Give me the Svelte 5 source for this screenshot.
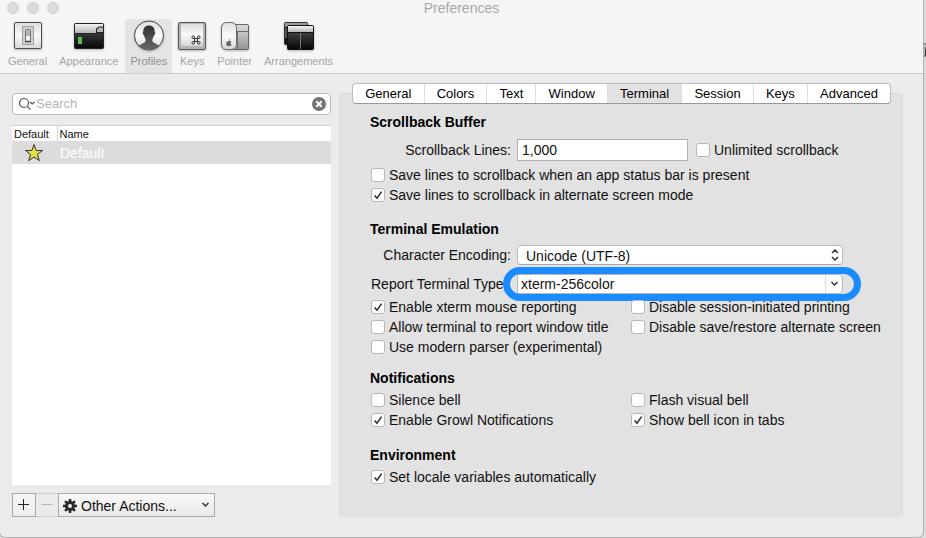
<script>
  const tabs = ['General', 'Colors', 'Text', 'Window', 'Terminal', 'Session', 'Keys', 'Advanced'];
  const tools = ['General', 'Appearance', 'Profiles', 'Keys', 'Pointer', 'Arrangements'];
  let activeTab = $state('Terminal');
  let activeTool = $state('Profiles');
  let query = $state('');
  let lines = $state('1,000');
  let terminalType = $state('xterm-256color');
</script>

{#snippet check(text, on)}
  <label class="check">
    <span class="box">
      <input type="checkbox" checked={on} />
      <svg viewBox="0 0 14 14" aria-hidden="true"><path d="M3.6 7.4 L6 10.2 L10.6 3.6" /></svg>
    </span>
    <span>{text}</span>
  </label>
{/snippet}

{#snippet toolIcon(name)}
  <svg class="tool-icon" viewBox="0 0 34 34" aria-hidden="true">
    {#if name === 'General'}
      <rect x="3.5" y="2.5" width="27" height="26" rx="1.5" fill="url(#plate)" stroke="#4b4b4b" />
      <rect x="11.5" y="6.5" width="11" height="18" fill="#cfcfcf" stroke="#a2a2a2" />
      <rect x="14.5" y="9.5" width="5" height="12" rx="1" fill="#f2f2f2" stroke="#777" />
      <rect x="15" y="10" width="4" height="6" fill="#b5b5b5" />
      <path d="M14 21.5h6" stroke="#444" stroke-width="1.5" />
    {:else if name === 'Appearance'}
      <rect x="2.5" y="3.5" width="29" height="25" rx="1" fill="url(#screen)" stroke="#222" />
      <path d="M3 4h28v3h-5l-2 2v4H3z" fill="url(#bar)" />
      <path d="M3 13.5h21.5V9l2-2h5M25 12.5h7" fill="none" stroke="#222" />
      <path d="M25 12V9.500l2-2h4V12z" fill="#b4b4b4" />
      <rect x="6" y="17" width="4" height="7" fill="#4fc25a" />
    {:else if name === 'Profiles'}
      <circle cx="17" cy="15.5" r="14.5" fill="url(#plate)" stroke="#444" />
      <path d="M17 5.500c-3.900 0-6 2.500-5.700 6.500-.8 0-.6 2.800.7 3.500.5 2 1.400 3 1.700 4.500.2 1.800-1.200 2.700-4 4-1.300.6-2.500 1.200-3.200 2A14 14 0 0 0 17 29.500a14 14 0 0 0 10.500-3.500c-.7-.8-1.900-1.400-3.200-2-2.800-1.300-4.200-2.200-4-4 .3-1.500 1.200-2.500 1.700-4.500 1.300-.7 1.500-3.500.7-3.500.3-4-1.800-6.500-5.700-6.500z" fill="url(#person)" />
    {:else if name === 'Keys'}
      <rect x="3.5" y="2.500" width="27" height="27" rx="1.500" fill="#b4b4b4" stroke="#555" />
      <rect x="6" y="4" width="22" height="22" rx="1.500" fill="url(#plate)" />
      <g fill="none" stroke="#333">
        <rect x="19.500" y="18.500" width="3" height="3" />
        <circle cx="18.200" cy="17.200" r="1.300" /><circle cx="23.800" cy="17.200" r="1.300" />
        <circle cx="18.200" cy="22.800" r="1.300" /><circle cx="23.800" cy="22.800" r="1.300" />
      </g>
    {:else if name === 'Pointer'}
      <rect x="10.500" y="4.500" width="20" height="25" rx="1.500" fill="url(#grey)" stroke="#686868" />
      <path d="M18 11.500h12M19.500 11.500v18" stroke="#707070" />
      <rect x="3.500" y="2.500" width="15" height="27" rx="5" fill="url(#plate)" stroke="#686868" />
      <path d="M10.800 21.300c-2.600-1-3.400 3-1.400 4.700.6.500 1 .1 1.500.1s1 .4 1.600-.2c.6-.6.9-1.100 1-1.600-1.200-.6-1.100-1.900-.1-2.500-.8-1-1.700-.8-2.600-.5zM10.800 20.800c.1-1 .7-1.500 1.400-1.700.1 1-.5 1.600-1.400 1.700z" fill="#666" />
    {:else}
      <rect x="2.500" y="2.500" width="23" height="22" rx="1" fill="#111" stroke="#333" />
      <path d="M3 3h22v4H3z" fill="#9b9b9b" />
      <path d="M3 8h3v10H3z" fill="#555" />
      <rect x="5.500" y="5.500" width="26" height="24" rx="1" fill="url(#screen)" stroke="#111" />
      <path d="M6 6h25v6H6z" fill="url(#bar)" />
      <path d="M5 12.500h27" stroke="#111" />
      <path d="M18.500 13v16" stroke="#777" />
    {/if}
  </svg>
{/snippet}

<svg class="defs" aria-hidden="true">
  <defs>
    <linearGradient id="plate" x2="0" y2="1"><stop stop-color="#dedede" /><stop offset=".5" stop-color="#fafafa" /><stop offset="1" stop-color="#d6d6d6" /></linearGradient>
    <linearGradient id="bar" x2="0" y2="1"><stop stop-color="#f4f4f4" /><stop offset="1" stop-color="#b5b5b5" /></linearGradient>
    <linearGradient id="screen" x2="0" y2="1"><stop stop-color="#555" /><stop offset=".45" stop-color="#333" /><stop offset="1" stop-color="#050505" /></linearGradient>
    <linearGradient id="person" x2="0" y2="1"><stop stop-color="#333" /><stop offset="1" stop-color="#666" /></linearGradient>
    <linearGradient id="grey" x2="0" y2="1"><stop stop-color="#ddd" /><stop offset="1" stop-color="#929292" /></linearGradient>
  </defs>
</svg>

<div class="desktop">
  <svg class="behind" viewBox="0 0 3 14" aria-hidden="true">
    <path d="M0 1h3M0 5h3M0 13h3" stroke="#333a4c" stroke-width="1" />
    <path d="M0 3h3" stroke="#b9a08c" /><path d="M1 7v5" stroke="#d07a35" /><path d="M2.500 6v7" stroke="#28365c" />
  </svg>
  <div class="window">
    <header>
      <div class="titlebar">
        <div class="lights"><i></i><i></i><i></i></div>
        <h1>Preferences</h1>
      </div>
      <nav class="toolbar">
        {#each tools as tool}
          <button class:active={tool === activeTool} onclick={() => (activeTool = tool)}>
            {@render toolIcon(tool)}
            <span>{tool}</span>
          </button>
        {/each}
      </nav>
    </header>

    <main>
      <aside>
        <div class="search">
          <svg class="lens" viewBox="0 0 18 14" aria-hidden="true">
            <circle cx="6" cy="6" r="4.500" /><path d="M9.300 9.300l3.200 3.400M12 5l2.200 2L16.500 5" />
          </svg>
          <input type="text" aria-label="Search profiles" placeholder="Search" bind:value={query} />
          <button aria-label="Clear search" onclick={() => (query = '')}>
            <svg viewBox="0 0 14 14"><circle cx="7" cy="7" r="7" fill="#737373" /><path d="M4.300 4.300l5.400 5.400M9.700 4.300l-5.400 5.400" stroke="#fff" stroke-width="2" /></svg>
          </button>
        </div>

        <div class="list">
          <table>
            <thead><tr><th class="first">Default</th><th>Name</th></tr></thead>
            <tbody>
              <tr>
                <td class="first">
                  <svg viewBox="0 0 20 19" role="img" aria-label="Default profile"><path d="M10 1.500l2.200 6h6.300l-5 4 1.800 6.200L10 14l-5.300 3.700 1.800-6.200-5-4h6.300z" fill="#e0dd45" stroke="#333" /></svg>
                </td>
                <td>Default</td>
              </tr>
            </tbody>
          </table>
        </div>

        <div class="actions">
          <button aria-label="Add profile"><svg viewBox="0 0 12 12"><path d="M5.500 0v11M0 5.500h11" stroke="#222" /></svg></button>
          <button aria-label="Remove profile" class="off" disabled><svg viewBox="0 0 12 12"><path d="M.500 5.500h11" stroke="#b5b5b5" /></svg></button>
          <div class="pulldown">
            <select aria-label="Other actions"><option>Other Actions...</option></select>
            <svg class="gear" viewBox="0 0 14 14" aria-hidden="true">
              <g stroke="#2b2b2b" stroke-width="2.600"><path d="M7 0v14M0 7h14M2.050 2.050l9.900 9.900M11.950 2.050l-9.900 9.900" /></g>
              <circle cx="7" cy="7" r="5" fill="#2b2b2b" /><circle cx="7" cy="7" r="2" fill="#f4f4f4" />
            </svg>
            <svg class="chevron" viewBox="0 0 9 6" aria-hidden="true"><path d="M1.500 1l3 3 3-3" /></svg>
          </div>
        </div>
      </aside>

      <div class="panel">
        <div class="tabs" role="tablist">
          {#each tabs as tab}
            <button role="tab" aria-selected={tab === activeTab} onclick={() => (activeTab = tab)}>{tab}</button>
          {/each}
        </div>

        <section>
          <h2>Scrollback Buffer</h2>
          <div class="row">
            <label class="caption" for="lines">Scrollback Lines:</label>
            <input id="lines" class="lines" type="text" bind:value={lines} />
            {@render check('Unlimited scrollback', false)}
          </div>
          <div class="stack">
            {@render check('Save lines to scrollback when an app status bar is present', false)}
            {@render check('Save lines to scrollback in alternate screen mode', true)}
          </div>
        </section>

        <section class="emulation">
          <h2>Terminal Emulation</h2>
          <div class="row">
            <label class="caption" for="encoding">Character Encoding:</label>
            <div class="popup">
              <select id="encoding"><option>Unicode (UTF-8)</option></select>
              <svg class="updown" viewBox="0 0 8 12" aria-hidden="true"><path d="M1 4l3-3 3 3M1 8l3 3 3-3" /></svg>
            </div>
          </div>
          <div class="row">
            <label class="caption type" for="type">Report Terminal Type:</label>
            <div class="combo">
              <input id="type" type="text" bind:value={terminalType} />
              <button aria-label="Show terminal types"><svg viewBox="0 0 9 6"><path d="M1.500 1l3 3 3-3" /></svg></button>
              <span class="marker"></span>
            </div>
          </div>
          <div class="columns">
            <div>
              {@render check('Enable xterm mouse reporting', true)}
              {@render check('Allow terminal to report window title', false)}
              {@render check('Use modern parser (experimental)', false)}
            </div>
            <div>
              {@render check('Disable session-initiated printing', false)}
              {@render check('Disable save/restore alternate screen', false)}
            </div>
          </div>
        </section>

        <section>
          <h2>Notifications</h2>
          <div class="columns">
            <div>
              {@render check('Silence bell', false)}
              {@render check('Enable Growl Notifications', true)}
            </div>
            <div>
              {@render check('Flash visual bell', false)}
              {@render check('Show bell icon in tabs', true)}
            </div>
          </div>
        </section>

        <section>
          <h2>Environment</h2>
          <div class="columns">{@render check('Set locale variables automatically', true)}</div>
        </section>
      </div>
    </main>
  </div>
</div>

<style>
  :global(body) { margin: 0; }
  .desktop, .desktop * { box-sizing: border-box; }
  .desktop {
    position: relative;
    display: flex;
    min-height: 100vh;
    padding: 0 3px 1px 0;
    background: #dcdcdc;
    color: #111;
    font: 14px/20px "Liberation Sans", Arial, sans-serif;
  }
  .defs { position: absolute; width: 0; height: 0; }
  .behind { position: absolute; right: 0; top: 43px; width: 3px; height: 14px; }
  .window {
    position: relative;
    flex: 1;
    display: flex;
    flex-direction: column;
    min-width: 0;
    background: #ebebeb;
    border-radius: 0 0 5px 5px;
    box-shadow: 0 0 1px 1px #b0b0b0;
  }
  button, input, select { font: inherit; color: inherit; margin: 0; padding: 0; border: 0; border-radius: 0; appearance: none; background: none; outline: none; }
  button { display: flex; align-items: center; justify-content: center; }
  h1, h2 { margin: 0; font-size: 14px; }
  svg { display: block; }

  header { background: #f5f5f5; border-bottom: 1px solid #cdcdcd; }
  .titlebar { position: relative; height: 19px; }
  .titlebar h1 { font-weight: 400; color: #a8a8a8; text-align: center; line-height: 17px; }
  .lights { position: absolute; left: 7px; top: 2px; display: flex; gap: 8px; }
  .lights i { width: 12px; height: 12px; border-radius: 50%; background: #dcdcdc; border: 1px solid #cfcfcf; }
  .toolbar { display: flex; gap: 2px; padding-left: 3px; }
  .toolbar button { flex-direction: column; justify-content: flex-start; min-width: 36px; height: 54px; padding: 1px 5px 0; border-radius: 4px 4px 0 0; color: #a5a5a5; font-size: 11px; line-height: 14px; }
  .toolbar button.active { background: #e4e4e4; color: #8e8e8e; }
  .tool-icon { flex: none; width: 34px; height: 34px; margin: 0 -4px; filter: drop-shadow(0 1px 1px #0004); }

  main { flex: 1; display: grid; grid-template-columns: minmax(0, 319fr) minmax(0, 564fr); gap: 8px; padding: 19px 20px 20px 12px; }
  aside { display: flex; flex-direction: column; }
  .search { display: flex; align-items: center; height: 22px; padding: 0 4px 0 5px; background: #fff; border: 1px solid #b9b9b9; border-radius: 4px; font-size: 13px; }
  .search input { flex: 1; min-width: 0; height: 20px; }
  .search input::placeholder { color: #b4b4b4; opacity: 1; }
  .lens { width: 18px; height: 14px; fill: none; stroke: #555; stroke-width: 1.200; }
  .search button, .search button svg { width: 14px; height: 14px; }
  .list { flex: 1; margin: 10px 0 8px; background: #fff; border-top: 1px solid #cfcfcf; }
  table { width: 100%; border-collapse: collapse; table-layout: fixed; }
  th { height: 15px; padding: 0 0 0 2px; font-size: 11px; line-height: 14px; font-weight: 400; text-align: left; }
  th.first { width: 45px; border-right: 1px solid #d4d4d4; }
  td { height: 23px; padding: 0 0 0 3px; background: #dcdcdc; color: #fff; }
  td.first { padding: 0 0 0 12px; }
  td svg { width: 20px; height: 19px; }
  .actions { display: flex; height: 24px; }
  .actions button { width: 24px; border: 1px solid #a9a9a9; background: linear-gradient(#f6f6f6, #ececec); }
  .actions button.off { width: 22px; border-color: #cfcfcf; border-width: 1px 0; background: none; }
  .actions button svg { width: 12px; height: 12px; }
  .pulldown { position: relative; width: 157px; border: 1px solid #a9a9a9; background: linear-gradient(#f8f8f8, #e9e9e9); }
  .pulldown select { width: 100%; height: 22px; padding: 2px 16px 0 22px; }
  .gear { position: absolute; left: 4px; top: 5px; width: 14px; height: 14px; pointer-events: none; }
  .chevron, .updown { position: absolute; pointer-events: none; }
  .chevron { right: 4px; top: 8px; width: 9px; height: 6px; }
  .chevron, .updown, .combo button svg { fill: none; stroke: #333; stroke-width: 1.500; }

  .panel { padding: 0 11px 0 30px; background: #e2e2e2; border: 1px solid #dadada; border-width: 1px 1px 0; border-radius: 4px; }
  .tabs { display: flex; height: 21px; margin: -11px 0 8px -18px; border: 1px solid #bdbdbd; border-bottom-color: #999; border-radius: 4px; background: #fff; overflow: hidden; font-size: 13px; }
  .tabs button { flex: 1 1 auto; padding: 0 10px; border-left: 1px solid #ddd; color: #000; }
  .tabs button:first-child { border-left: 0; }
  .tabs button[aria-selected='true'] { background: #e2e2e2; }

  section { margin-bottom: 15px; }
  section:nth-of-type(1) { margin-bottom: 14px; }
  section.emulation { margin-bottom: 11px; }
  h2 { font-weight: 700; color: #000; }
  .row { display: flex; align-items: center; height: 22px; margin-top: 7px; }
  .emulation h2 + .row { margin-top: 5px; }
  .caption { flex: none; width: 141px; margin-right: 6px; text-align: right; white-space: nowrap; }
  .caption.type { text-align: left; padding-left: 1px; }
  .lines { width: 171px; height: 22px; margin-right: 8px; padding: 0 4px; background: #fff; border: 1px solid #b0b0b0; }
  .stack { margin-top: 4px; padding-left: 1px; }
  .columns { display: grid; grid-template-columns: 260px auto; margin-top: 2px; padding-left: 1px; }
  .check { display: flex; align-items: center; gap: 4px; height: 20px; white-space: nowrap; }
  .box { position: relative; width: 14px; height: 14px; }
  .box input { display: block; width: 14px; height: 14px; background: #fff; border: 1px solid #b8b8b8; border-radius: 3px; }
  .box svg { position: absolute; inset: 0; fill: none; stroke: #333; stroke-width: 1.600; visibility: hidden; pointer-events: none; }
  .box input:checked + svg { visibility: visible; }
  .popup { position: relative; width: 326px; }
  .popup select { display: block; width: 100%; height: 20px; padding: 0 20px 0 8px; background: #fff; border: 1px solid #bcbcbc; border-bottom-color: #a5a5a5; border-radius: 4px; }
  .updown { right: 4px; top: 4px; width: 8px; height: 12px; }
  .combo { position: relative; display: flex; width: 326px; height: 20px; background: #fff; border: 1px solid #b8b8b8; border-radius: 0 4px 4px 0; }
  .combo input { flex: 1; min-width: 0; padding-left: 3px; }
  .combo button { width: 17px; border-left: 1px solid #d8d8d8; }
  .combo button svg { width: 9px; height: 6px; }
  .marker { position: absolute; inset: -8px -19px -8px -15px; border: 7px solid #1a8cff; border-radius: 17px; pointer-events: none; }
</style>
